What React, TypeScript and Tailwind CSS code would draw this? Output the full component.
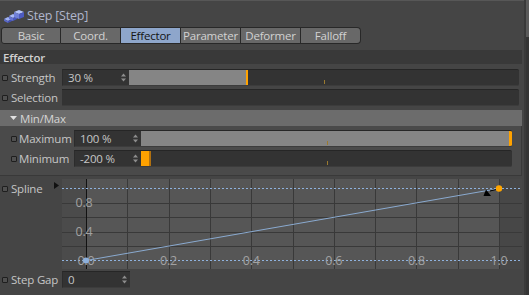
import React from "react"

const textCol = "text-[#c6c6c6]"

function Check() {
  return <span className="block w-[6px] h-[6px] shrink-0 border border-[#1e1e1e] rounded-[1px] bg-[#505050]" />
}

function Spin() {
  return (
    <svg width="5" height="9" viewBox="0 0 5 9" className="shrink-0">
      <polygon points="0,3.5 2.5,0.5 5,3.5" fill="#8e8e8e" />
      <polygon points="0,5.5 2.5,8.5 5,5.5" fill="#8e8e8e" />
    </svg>
  )
}

function Field({ value, w = "w-[67px]", spin = true }: { value: string; w?: string; spin?: boolean }) {
  return (
    <div className={`${w} h-[17px] shrink-0 bg-[#333333] border-t border-[#262626] border-l border-l-[#2c2c2c] border-b border-b-[#3c3c3c] flex items-center justify-between pl-[5px] pr-[3px] ${textCol}`}>
      <span>{value}</span>
      {spin && <Spin />}
    </div>
  )
}

function Slider({ fill, orange, orangeEdge = 0 }: { fill: number; orange: [number, number]; orangeEdge?: number }) {
  // fill / orange in px from slider left
  return (
    <div className="relative flex-1 h-[17px] bg-[#333333] border-t border-[#262626] border-b border-b-[#3c3c3c] rounded-r-[2px] overflow-hidden">
      <div className="absolute left-0 top-0 bottom-0 bg-[#858585]" style={{ width: fill }} />
      <div className="absolute top-0 bottom-0 bg-[#ffa200]" style={{ left: orange[0], width: orange[1] }} />
      {orangeEdge > 0 && (
        <div className="absolute top-0 bottom-0 bg-[#b07010]" style={{ left: orange[0] + orange[1], width: orangeEdge }} />
      )}
      <div className="absolute left-1/2 bottom-[1px] w-px h-[4px] bg-[#9a7a30]" />
    </div>
  )
}

function StepIcon() {
  return (
    <svg width="22" height="14" viewBox="0 0 22 14">
      {/* rising blocks */}
      <polygon points="1,10 5,8 9,10 5,12" fill="#9fb2f6" />
      <polygon points="1,10 5,12 5,14 1,12" fill="#5a68c8" />
      <polygon points="5,12 9,10 9,12 5,14" fill="#4352b8" />
      <polygon points="6,7 10,5 14,7 10,9" fill="#a8baf8" />
      <polygon points="6,7 10,9 10,12 6,10" fill="#6472d0" />
      <polygon points="10,9 14,7 14,10 10,12" fill="#4a58c0" />
      <polygon points="11,3 16,1 21,3 16,5" fill="#b4c4fc" />
      <polygon points="11,3 16,5 16,10 11,8" fill="#7080d8" />
      <polygon points="16,5 21,3 21,8 16,10" fill="#4d5bc2" />
    </svg>
  )
}

const tabs = ["Basic", "Coord.", "Effector", "Parameter", "Deformer", "Falloff"]

function Graph() {
  const x0 = 24
  const x1 = 437
  const yTop = 10.5
  const yBot = 82.5
  const vx = Array.from({ length: 10 }, (_, i) => x0 + ((x1 - x0) * (i + 1)) / 10)
  const hy = [0.8, 0.6, 0.4, 0.2].map((v) => yBot - (yBot - yTop) * v)
  const lab = { fill: "#a2a2a2", fontSize: 12.5, fontFamily: "'Open Sans', 'Noto Sans', sans-serif" }
  return (
    <svg width="460" height="92" viewBox="0 0 460 92" className="block">
      <rect x="0" y="1" width={x0} height="90" fill="#4b4b4b" />
      <rect x={x0} y="1" width={x1 - x0} height="90" fill="#565656" />
      <rect x={x1} y="1" width={460 - x1} height="90" fill="#474747" />
      {hy.map((y, i) => (
        <line key={i} x1="0" x2="460" y1={Math.round(y) + 0.5} y2={Math.round(y) + 0.5} stroke="#393939" />
      ))}
      {vx.map((x, i) => (
        <line key={i} x1={Math.round(x) + 0.5} x2={Math.round(x) + 0.5} y1="1" y2="91" stroke="#393939" />
      ))}
      <line x1={x0 + 0.5} x2={x0 + 0.5} y1="1" y2="91" stroke="#121212" />
      <line x1="0" x2="460" y1={yTop} y2={yTop} stroke="#8fb2de" strokeDasharray="2 2" />
      <line x1="0" x2="460" y1={yBot} y2={yBot} stroke="#8fb2de" strokeDasharray="2 2" />
      <text x="22" y={hy[0] + 4.5} textAnchor="middle" {...lab}>0.8</text>
      <text x="22" y={hy[2] + 4.5} textAnchor="middle" {...lab}>0.4</text>
      {[0, 0.2, 0.4, 0.6, 0.8, 1].map((v, i) => (
        <text key={i} x={x0 + (x1 - x0) * v} y={yBot + 4.5} textAnchor="middle" {...lab}>
          {v.toFixed(1)}
        </text>
      ))}
      <line x1={x0} y1={yBot} x2={x1} y2={yTop} stroke="#8aaad0" />
      <circle cx={x0} cy={yBot} r="3" fill="#8eb0dc" />
      <line x1="428" y1="13" x2="436" y2="11" stroke="#000" />
      <polygon points="424,11.5 421.5,18 429,18" fill="#000" />
      <circle cx={x1} cy={yTop} r="3.2" fill="#ffa500" />
    </svg>
  )
}

export default function App() {
  return (
    <div className="w-[529px] h-[295px] bg-[#454545] flex overflow-hidden font-['Open_Sans','Noto_Sans',sans-serif] text-[11.5px] tracking-[-0.2px] leading-[15px]">
      <div className="w-[524px] flex flex-col shrink-0 border-t border-[#575757]">
        {/* Title */}
        <div className="h-[26px] flex items-center pl-[3px] gap-[2px] pt-[3px]">
          <StepIcon />
          <span className="text-[#b0b6cc] text-[12.5px]">Step [Step]</span>
        </div>

        {/* Tabs */}
        <div className="flex pl-[1px] h-[17px]">
          {tabs.map((t, i) => (
            <div
              key={t}
              className={`w-[60px] h-[17px] flex items-center justify-center border-y border-r border-[#282828] ${
                i === 0 ? "border-l rounded-l-[3px]" : ""
              } ${i === tabs.length - 1 ? "rounded-r-[4px]" : ""} ${
                t === "Effector" ? "bg-[#8ea6cb] text-[#141414]" : "bg-[#686868] text-[#d2d2d2]"
              }`}
            >
              {t}
            </div>
          ))}
        </div>

        {/* Effector header */}
        <div className="mt-[6px] w-[522px] h-[14px] bg-[#393939] flex items-center pl-[3px] text-[#d0d0d0] font-semibold">
          Effector
        </div>

        {/* Strength */}
        <div className="mt-[5px] w-[519px] h-[17px] flex items-center">
          <div className="w-[62px] flex items-center gap-[3px] pl-[2px]">
            <Check />
            <span className={textCol}>Strength</span>
          </div>
          <Field value="30 %" />
          <Slider fill={117} orange={[117, 2]} />
        </div>

        {/* Selection */}
        <div className="mt-[3px] w-[519px] h-[17px] flex items-center">
          <div className="w-[62px] flex items-center gap-[3px] pl-[2px]">
            <Check />
            <span className={textCol}>Selection</span>
          </div>
          <div className="flex-1 h-[17px] bg-[#333333] border-t border-[#262626] border-b border-b-[#3c3c3c] rounded-r-[2px]" />
        </div>

        {/* Min/Max header */}
        <div className="mt-[4px] w-[522px] h-[16px] bg-[#6c6c6c] flex items-center pl-[10px] gap-[3px] text-[#d4d4d4]">
          <svg width="7" height="4" viewBox="0 0 7 4">
            <polygon points="0,0 7,0 3.5,4" fill="#e0e0e0" />
          </svg>
          <span>Min/Max</span>
        </div>

        {/* Min/Max group */}
        <div className="w-[522px] h-[50px] bg-[#4a4a4a] border-r border-b border-[#393939] flex flex-col pt-[4px]">
          <div className="w-[512px] h-[17px] flex items-center">
            <div className="w-[74px] flex items-center gap-[2px] pl-[11px]">
              <Check />
              <span className={textCol}>Maximum</span>
            </div>
            <Field value="100 %" />
            <Slider fill={368} orange={[368, 3]} />
          </div>
          <div className="mt-[3px] w-[512px] h-[17px] flex items-center">
            <div className="w-[74px] flex items-center gap-[2px] pl-[11px]">
              <Check />
              <span className={textCol}>Minimum</span>
            </div>
            <Field value="-200 %" />
            <Slider fill={0} orange={[0, 8]} orangeEdge={2} />
          </div>
        </div>

        {/* Spline */}
        <div className="mt-[2px] flex">
          <div className="w-[62px] flex items-start pl-[2px] pt-[3px]">
            <div className="flex items-center gap-[3px] h-[15px]">
              <Check />
              <span className={textCol}>Spline</span>
            </div>
            <svg width="5" height="7" viewBox="0 0 5 7" className="ml-auto mr-[3px] mt-[1px]">
              <polygon points="0,0 5,3.5 0,7" fill="#111" />
            </svg>
          </div>
          <Graph />
        </div>

        {/* Step Gap */}
        <div className="mt-[1px] h-[17px] flex items-center">
          <div className="w-[62px] flex items-center gap-[3px] pl-[2px]">
            <Check />
            <span className={textCol}>Step Gap</span>
          </div>
          <Field value="0" w="w-[68px]" />
        </div>
      </div>

      {/* scrollbar */}
      <div className="w-[2px] bg-[#3a3a3a]" />
      <div className="w-[3px] flex flex-col">
        <div className="h-[37px] bg-[#5a5a5a]" />
        <div className="flex-1 bg-[#343434]" />
      </div>
    </div>
  )
}
